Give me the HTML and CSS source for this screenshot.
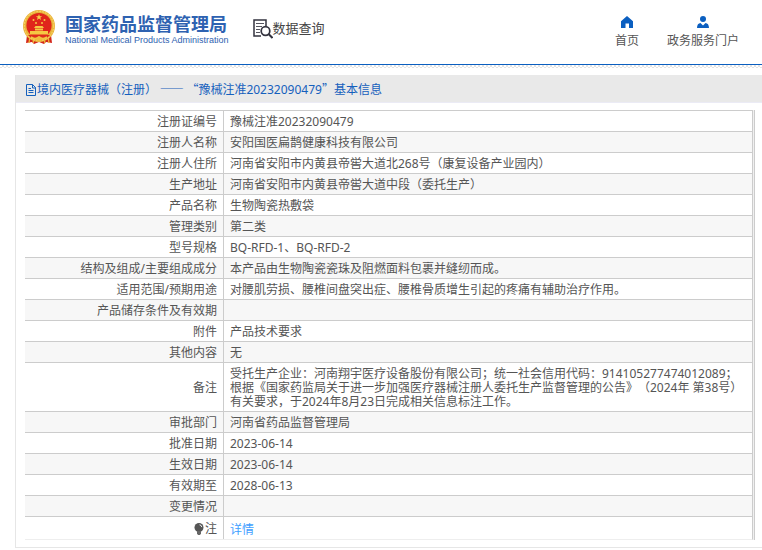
FILE: index.html
```html
<!DOCTYPE html>
<html lang="zh-CN">
<head>
<meta charset="utf-8">
<title>国家药品监督管理局 数据查询</title>
<link rel="stylesheet" href="styles.css">
</head>
<body>
<header class="site-header">
  <a class="brand" href="#">
    <svg class="emblem" viewBox="0 0 34 36" aria-hidden="true">
      <path d="M5 26 4 34l6-1 2 2 5-2 5 2 2-2 6 1-1-8z" fill="#d3261b"/>
      <path d="M8 27l-1 7M26 27l1 7M12 30l-1 4M22 30l1 4" stroke="#efb739" stroke-width="1.3"/>
      <circle cx="17" cy="17" r="16" fill="#e9b23a"/>
      <circle cx="17" cy="17" r="14.7" fill="none" stroke="#f6d060" stroke-width="1.2" stroke-dasharray="2 1"/>
      <circle cx="17" cy="16.500" r="12.600" fill="#e0251b"/>
      <path d="M17 5l.8 2.200h2.400l-1.900 1.400.7 2.300-2-1.400-2 1.400.7-2.300-1.900-1.400h2.400z" fill="#f8d34b"/>
      <g fill="#f5c843"><circle cx="11.500" cy="11" r="1"/><circle cx="22.500" cy="11" r="1"/><circle cx="14" cy="14" r="1"/><circle cx="20" cy="14" r="1"/></g>
      <path d="M12 19l1.500-2h7l1.500 2zM13 19.500h8v2h-8zM8 22h18v3.500H8z" fill="#f5c843"/>
      <path d="M6 26h22l-3 3H9z" fill="#df2b1c"/>
      <path d="M9 28q4 3 8 0 4 3 8 0" fill="none" stroke="#f3c443" stroke-width="1.600"/>
      <circle cx="17" cy="30" r="2.600" fill="#f0bd3f"/>
    </svg>
    <span class="brand-text">
      <span class="brand-cn">国家药品监督管理局</span>
      <span class="brand-en">National Medical Products Administration</span>
    </span>
  </a>
  <a class="query" href="#">
    <svg class="query-icon" viewBox="0 0 20 20" aria-hidden="true">
      <path d="M8 17H1V1h12v6" fill="none" stroke="#33333f" stroke-width="1.500"/>
      <path d="M3 4.500h8M3 7.500h6M3 10.500h4M3 13.500h4" stroke="#55555f" stroke-width="1.100"/>
      <circle cx="12.500" cy="12" r="4.300" fill="#fff" stroke="#33333f" stroke-width="1.700"/>
      <path d="M15.500 15l4 4" stroke="#33333f" stroke-width="2"/>
    </svg>
    <span>数据查询</span>
  </a>
  <nav class="top-nav">
    <a href="#">
      <svg viewBox="0 0 12 12" aria-hidden="true"><path d="M6 0l6 5.200V12H8V7.500H4.500V12H0V5.200z" fill="#0b5fc0"/></svg>
      <span>首页</span>
    </a>
    <a href="#">
      <svg viewBox="0 0 12 12" aria-hidden="true"><circle cx="6" cy="3" r="3" fill="#0b5fc0"/><path d="M0 12c0-3.200 1.400-4.800 3.500-5L6 9.500 8.500 7c2.100.2 3.500 1.800 3.500 5z" fill="#0b5fc0"/></svg>
      <span>政务服务门户</span>
    </a>
  </nav>
</header>
<div class="hatch"></div>

<main class="panel">
  <h1 class="panel-title">
    <svg viewBox="0 0 11 12" aria-hidden="true"><path d="M.5.500H6.500l3 3v8H.5zM6.500.5v3.500H10M2.500 4.500H5M2.500 6.500h5M2.500 8.500h5" fill="none" stroke="#1560bd"/></svg>
    <span>境内医疗器械（注册） —— “豫械注准<span class="code">20232090479</span>”基本信息</span>
  </h1>
  <div class="panel-body">
    <div class="table-frame">
      <table class="info">
        <tbody>
          <tr><th scope="row">注册证编号</th><td>豫械注准20232090479</td></tr>
          <tr><th scope="row">注册人名称</th><td>安阳国医扁鹊健康科技有限公司</td></tr>
          <tr><th scope="row">注册人住所</th><td>河南省安阳市内黄县帝喾大道北268号（康复设备产业园内）</td></tr>
          <tr><th scope="row">生产地址</th><td>河南省安阳市内黄县帝喾大道中段（委托生产）</td></tr>
          <tr><th scope="row">产品名称</th><td>生物陶瓷热敷袋</td></tr>
          <tr><th scope="row">管理类别</th><td>第二类</td></tr>
          <tr><th scope="row">型号规格</th><td>BQ-RFD-1、BQ-RFD-2</td></tr>
          <tr><th scope="row">结构及组成/主要组成成分</th><td>本产品由生物陶瓷瓷珠及阻燃面料包裹并缝纫而成。</td></tr>
          <tr><th scope="row">适用范围/预期用途</th><td>对腰肌劳损、腰椎间盘突出症、腰椎骨质增生引起的疼痛有辅助治疗作用。</td></tr>
          <tr><th scope="row">产品储存条件及有效期</th><td></td></tr>
          <tr><th scope="row">附件</th><td>产品技术要求</td></tr>
          <tr><th scope="row">其他内容</th><td>无</td></tr>
          <tr><th scope="row">备注</th><td>受托生产企业：河南翔宇医疗设备股份有限公司；统一社会信用代码：914105277474012089；<br>根据《国家药监局关于进一步加强医疗器械注册人委托生产监督管理的公告》（2024年 第38号）<br>有关要求，于2024年8月23日完成相关信息标注工作。</td></tr>
          <tr><th scope="row">审批部门</th><td>河南省药品监督管理局</td></tr>
          <tr><th scope="row">批准日期</th><td>2023-06-14</td></tr>
          <tr><th scope="row">生效日期</th><td>2023-06-14</td></tr>
          <tr><th scope="row">有效期至</th><td>2028-06-13</td></tr>
          <tr><th scope="row">变更情况</th><td></td></tr>
          <tr class="note"><th scope="row"><svg class="bulb" viewBox="0 0 10 12" aria-hidden="true"><circle cx="5" cy="4.500" r="4.500" fill="#555"/><path d="M3 8h4v2.500L6 12H4l-1-1.500z" fill="#666"/><path d="M5.500 1.800q2 .2 2.300 2.300" fill="none" stroke="#fff" stroke-width=".9"/></svg>注</th><td><a href="#">详情</a></td></tr>
        </tbody>
      </table>
    </div>
  </div>
</main>
</body>
</html>
```
FILE: styles.css
```css
* {
  box-sizing: border-box;
}

body {
  margin: 0;
  background: #fff;
  color: #555;
  font: 12px/14px "Noto Sans", "Noto Sans CJK SC", sans-serif;
  text-spacing-trim: space-all;
}

a {
  color: inherit;
  text-decoration: none;
}

svg {
  display: block;
  flex: none;
}

.site-header {
  display: flex;
  align-items: flex-start;
  height: 65px;
  padding: 9px 23px 0 22px;
  border-bottom: 1px solid #0b5fc0;
}

.brand {
  display: flex;
  gap: 9px;
  color: #2e62b1;
}

.emblem {
  width: 34px;
  height: 36px;
}

.brand-text {
  display: flex;
  flex-direction: column;
  padding-top: 4px;
}

.brand-cn {
  font: bold 18px/20px "Noto Sans CJK SC", sans-serif;
}

.brand-en {
  font: 9px/14px "Liberation Sans", sans-serif;
}

.query {
  display: flex;
  margin: 10px 0 0 24px;
  color: #444;
  font: 13px/18px "Noto Sans CJK SC", sans-serif;
}

.query-icon {
  width: 20px;
  height: 20px;
}

.top-nav {
  display: flex;
  gap: 28px;
  margin-left: auto;
  padding-top: 7px;
  color: #555;
}

.top-nav a {
  display: flex;
  flex-direction: column;
  align-items: center;
  gap: 6px;
}

.top-nav svg {
  width: 12px;
  height: 12px;
}

.hatch {
  height: 3px;
  background: repeating-conic-gradient(#e4e4e4 0 25%, #fff 0 50%) 0 0 / 4px 4px;
}

.panel {
  margin: 7px 0 0 15px;
  border-bottom: 1px solid #e6e6e6;
  border-left: 1px solid #e6e6e6;
}

.panel-title {
  display: flex;
  align-items: center;
  height: 28px;
  margin: 0;
  padding: 2px 0 0 10px;
  border-bottom: 1px solid #ebebf5;
  background: #e9e9e9;
  color: #1560bd;
  font: 12px/14px "Noto Sans CJK SC", sans-serif;
}

.panel-title svg {
  width: 11px;
  height: 12px;
}

.code {
  font-family: "Noto Sans", sans-serif;
}

.panel-body {
  padding: 7px 7px 7px 9px;
}

.table-frame {
  padding-right: 1px;
  border-right: 1px solid #ccc;
  background: #f0f0f0;
}

.info {
  width: 100%;
  border-spacing: 0;
  border-right: 1px solid #ccc;
  border-bottom: 1px solid #eee;
  background: #fff;
}

.info th,
.info td {
  padding: 4px 6px 2px;
  border-top: 1px solid #ccc;
  font-weight: normal;
}

.info th {
  width: 198px;
  text-align: right;
}

.info td {
  height: 21px;
  border-left: 1px solid #ccc;
}

.info tr:nth-child(even) {
  background: #f7f7f7;
}

.info .note td {
  height: 23px;
  padding-top: 6px;
}

.info a {
  color: #409eff;
}

.bulb {
  display: inline-block;
  width: 10px;
  height: 12px;
  margin-right: 1px;
  vertical-align: -2px;
}
```
